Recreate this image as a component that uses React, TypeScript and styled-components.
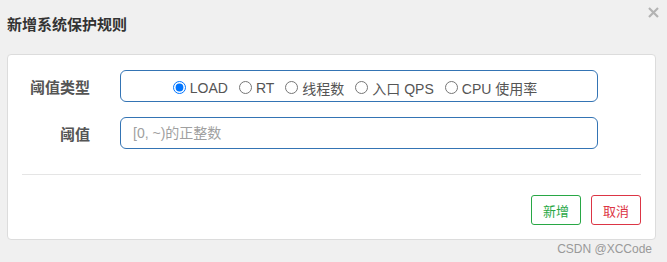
import React, {useState} from "react";
import styled, {createGlobalStyle} from "styled-components";

const GlobalStyle = createGlobalStyle`
  html, body {
    margin: 0;
    padding: 0;
    background: #f0f0f0;
  }
  body {
    font-family: "Liberation Sans", "Noto Sans CJK SC", sans-serif;
  }
`;

const types = ["LOAD", "RT", "线程数", "入口 QPS", "CPU 使用率"];

function App() {
  const [grade, setGrade] = useState("LOAD");

  return (
    <Page>
      <GlobalStyle />
      <Header>
        <Title>新增系统保护规则</Title>
        <Close aria-label="close">
          <svg width="11" height="11" viewBox="0 0 11 11">
            <path
              d="M1 1 L10 10 M10 1 L1 10"
              stroke="#b3b3b3"
              strokeWidth="2.2"
              strokeLinecap="butt"
            />
          </svg>
        </Close>
      </Header>
      <Panel>
        <Form>
          <Label>阈值类型</Label>
          <RadioBox>
            {types.map((t) => (
              <RadioItem key={t}>
                <input
                  type="radio"
                  name="grade"
                  checked={grade === t}
                  onChange={() => setGrade(t)}
                />
                {t}
              </RadioItem>
            ))}
          </RadioBox>
          <Label>阈值</Label>
          <Input placeholder="[0, ~)的正整数" />
        </Form>
        <Divider />
        <Footer>
          <Button $color="#28a745">新增</Button>
          <Button $color="#dc3545">取消</Button>
        </Footer>
      </Panel>
      <Mark>CSDN @XCCode</Mark>
    </Page>
  );
}

export default App;

const Page = styled.div`
  width: 667px;
  height: 262px;
  overflow: hidden;
`;

const Header = styled.div`
  height: 54px;
  display: flex;
  justify-content: space-between;
  align-items: flex-start;
  padding: 0 8px 0 7px;
`;

const Title = styled.h4`
  margin: 0;
  padding-top: 16px;
  font-size: 15px;
  line-height: 17px;
  font-weight: bold;
  color: #333;
`;

const Close = styled.button`
  margin-top: 7px;
  padding: 0;
  border: none;
  background: none;
  width: 11px;
  height: 11px;
  display: flex;
  cursor: pointer;
`;

const Panel = styled.div`
  margin: 0 11px 0 7px;
  height: 186px;
  box-sizing: border-box;
  background: #fff;
  border: 1px solid #dcdcdc;
  border-radius: 4px;
  padding-top: 15px;
`;

const Form = styled.div`
  display: grid;
  grid-template-columns: 82px 478px;
  column-gap: 30px;
  row-gap: 15px;
  align-items: center;
`;

const Label = styled.label`
  text-align: right;
  font-size: 15px;
  font-weight: bold;
  color: #555;
`;

const RadioBox = styled.div`
  height: 32px;
  box-sizing: border-box;
  border: 1px solid #3474b4;
  border-radius: 6px;
  display: flex;
  justify-content: center;
  align-items: center;
  padding: 3px 8px 0 0;
`;

const RadioItem = styled.label`
  display: flex;
  align-items: center;
  font-size: 14px;
  color: #555;
  margin-right: 11px;
  cursor: pointer;
  &:last-child {
    margin-right: 0;
  }
  input {
    width: 13px;
    height: 13px;
    margin: 0 4px 0 0;
  }
`;

const Input = styled.input`
  height: 32px;
  box-sizing: border-box;
  border: 1px solid #3474b4;
  border-radius: 6px;
  padding: 0 12px;
  font-size: 14px;
  font-family: inherit;
  color: #555;
  outline: none;
  &::placeholder {
    color: #a0a0a0;
  }
`;

const Divider = styled.div`
  margin: 25px 14px 0 14px;
  border-top: 1px solid #e5e5e5;
`;

const Footer = styled.div`
  display: flex;
  justify-content: flex-end;
  gap: 10px;
  padding: 20px 14px 0 0;
`;

const Button = styled.button<{$color: string}>`
  width: 50px;
  height: 30px;
  box-sizing: border-box;
  border: 1px solid ${(p) => p.$color};
  color: ${(p) => p.$color};
  background: #fff;
  border-radius: 3px;
  font-size: 13px;
  font-family: inherit;
  padding: 0;
  cursor: pointer;
`;

const Mark = styled.div`
  text-align: right;
  padding: 2px 15px 0 0;
  font-size: 12px;
  line-height: 14px;
  color: #999;
`;
